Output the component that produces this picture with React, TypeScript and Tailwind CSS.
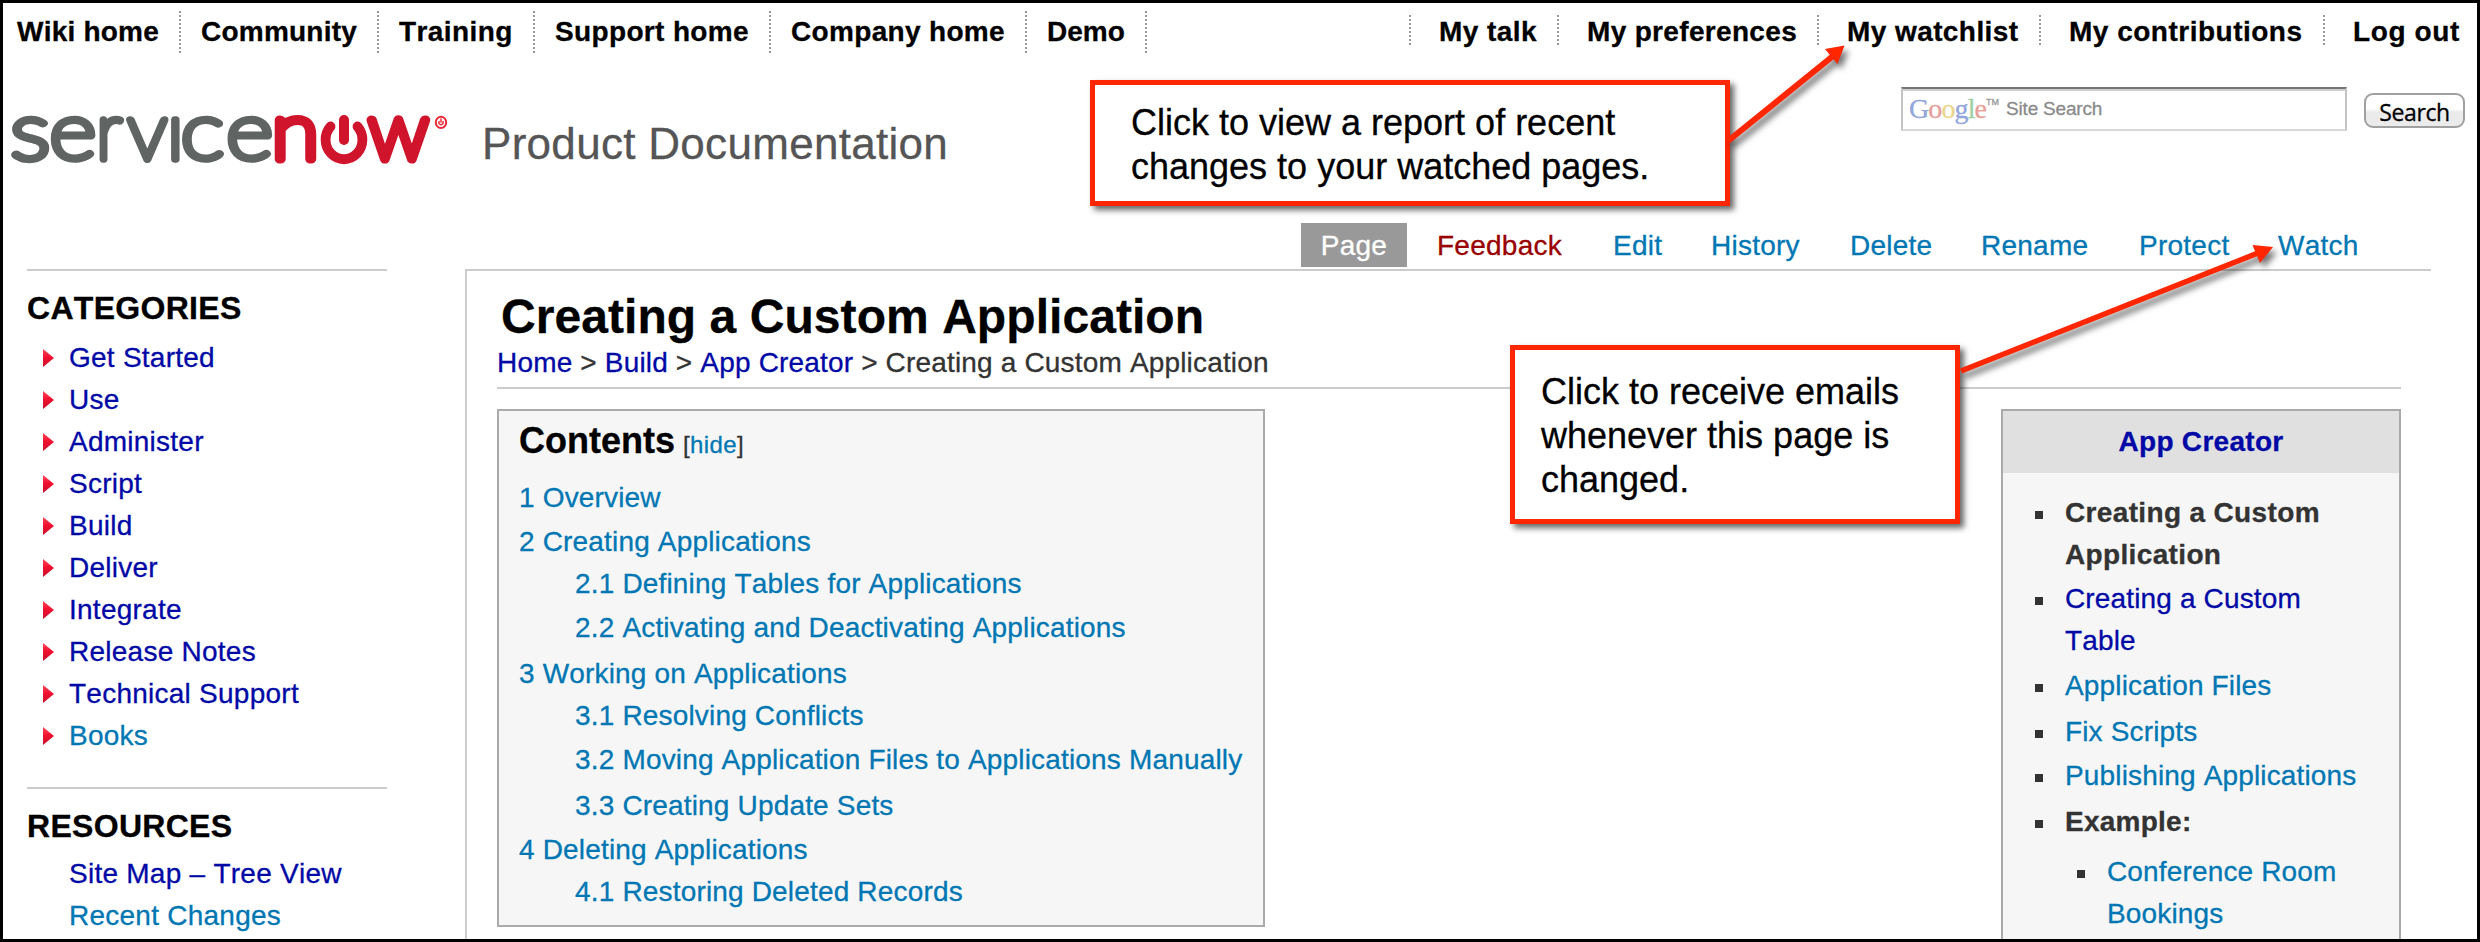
import type { ReactNode } from 'react';

const VISITED = 'text-[#0008a6]';
const LINK = 'text-[#0077b3]';

const DOTS = 'bg-[repeating-linear-gradient(to_bottom,#999_0px,#999_2px,#fff_2px,#fff_4px)]';

const siteLinks = [
  { label: 'Wiki home', box: 'w-[178px] pl-[14px] tracking-[0.22px]' },
  { label: 'Community', box: 'w-[198px] pl-[20px] tracking-[0.22px]' },
  { label: 'Training', box: 'w-[156px] pl-[20px] tracking-[0.4px]' },
  { label: 'Support home', box: 'w-[236px] pl-[20px] tracking-[0.35px]' },
  { label: 'Company home', box: 'w-[256px] pl-[20px] tracking-[0.33px]' },
  { label: 'Demo', box: 'w-[120px] pl-[20px]' },
];

const userLinks = [
  { label: 'My talk', box: 'w-[148px] tracking-[0.44px]' },
  { label: 'My preferences', box: 'w-[260px] tracking-[0.33px]' },
  { label: 'My watchlist', box: 'w-[222px] tracking-[0.42px]' },
  { label: 'My contributions', box: 'w-[284px] tracking-[0.5px]' },
  { label: 'Log out', box: 'w-[154px] tracking-[0.6px]' },
];

const actions = [
  { label: 'Feedback', box: 'w-[176px] text-[#990000]' },
  { label: 'Edit', box: 'w-[98px]' },
  { label: 'History', box: 'w-[139px]' },
  { label: 'Delete', box: 'w-[131px]' },
  { label: 'Rename', box: 'w-[158px]' },
  { label: 'Protect', box: 'w-[139px]' },
  { label: 'Watch', box: 'w-[100px]' },
];

const categories = [
  'Get Started',
  'Use',
  'Administer',
  'Script',
  'Build',
  'Deliver',
  'Integrate',
  'Release Notes',
  'Technical Support',
  'Books',
];

const toc = [
  { n: '1', label: 'Overview', box: 'h-[44px]' },
  { n: '2', label: 'Creating Applications', box: 'h-[42px]' },
  { n: '2.1', label: 'Defining Tables for Applications', box: 'h-[44px] pl-[56px]' },
  { n: '2.2', label: 'Activating and Deactivating Applications', box: 'h-[46px] pl-[56px]' },
  { n: '3', label: 'Working on Applications', box: 'h-[42px]' },
  { n: '3.1', label: 'Resolving Conflicts', box: 'h-[44px] pl-[56px]' },
  { n: '3.2', label: 'Moving Application Files to Applications Manually', box: 'h-[46px] pl-[56px]' },
  { n: '3.3', label: 'Creating Update Sets', box: 'h-[44px] pl-[56px]' },
  { n: '4', label: 'Deleting Applications', box: 'h-[42px]' },
  { n: '4.1', label: 'Restoring Deleted Records', box: 'h-[42px] pl-[56px]' },
];

function Logo() {
  const gray = { fill: '#606462', stroke: '#606462', strokeWidth: 7.5 };
  const red = { fill: '#d0142c', stroke: '#d0142c', strokeWidth: 9.2 };
  const letters = [
    { ch: 's', x: 10.6, sx: 1.18, paint: gray },
    { ch: 'e', x: 49.5, sx: 1.13, paint: gray },
    { ch: 'r', x: 96.2, sx: 0.93, paint: gray },
    { ch: 'v', x: 127.7, sx: 1, paint: gray },
    { ch: 'ı', x: 166.9, sx: 1, paint: gray },
    { ch: 'c', x: 180.7, sx: 1.15, paint: gray },
    { ch: 'e', x: 226.2, sx: 1.13, paint: gray },
    { ch: 'n', x: 271.7, sx: 1.08, paint: red },
    { ch: 'w', x: 368.6, sx: 1, paint: red },
  ];
  return (
    <svg
      viewBox="3 83 450 112"
      className="mt-[27px] h-[112px] w-[450px] shrink-0 overflow-visible font-['Lato',sans-serif] text-[80px] font-thin [-webkit-text-stroke:0]"
      strokeLinejoin="round"
      strokeLinecap="round"
    >
      {letters.map((l) => (
        <text key={l.x} transform={`translate(${l.x} 158.7) scale(${l.sx} 1)`} {...l.paint}>
          {l.ch}
        </text>
      ))}
      <path d="M330.5 126.5A18.4 19.5 0 1 0 357.5 126.5" fill="none" stroke="#d0142c" strokeWidth="9.8" />
      <path d="M344 120V140" fill="none" stroke="#d0142c" strokeWidth="10" />
      <ellipse cx="441" cy="122.4" rx="5.2" ry="5.6" fill="none" stroke="#ee2a38" strokeWidth="2" />
      <path d="M439 121.4v2.2q2 2.4 4 0v-2.2M441 119v3" fill="none" stroke="#ee2a38" strokeWidth="1.5" />
    </svg>
  );
}

function SearchForm() {
  return (
    <form className="flex items-start">
      <div className="mt-[31px] flex h-[44px] w-[446px] items-start border-x-2 border-t-2 border-b-2 border-x-[#c4c4c4] border-t-[#757575] border-b-[#d8d8d8] bg-white pl-[6px] whitespace-nowrap shadow-[inset_0_2px_0_#cfcfcf]">
        <span className="mt-[6px] font-['Liberation_Serif',serif] text-[28px] leading-[28px] tracking-[-0.9px]">
          <span className="text-[#92a6dc]">G</span>
          <span className="text-[#e79c98]">o</span>
          <span className="text-[#ead58c]">o</span>
          <span className="text-[#92a6dc]">g</span>
          <span className="text-[#9fd0a4]">l</span>
          <span className="text-[#e9a09a]">e</span>
        </span>
        <span className="mt-[8px] text-[9px] leading-[10px] text-[#999]">TM</span>
        <span className="mt-[9px] ml-[7px] text-[19px] leading-[21px] tracking-[-0.2px] text-[#8a8a8a]">Site Search</span>
      </div>
      <button
        type="button"
        className="mt-[37px] ml-[17px] h-[35px] w-[101px] rounded-[9px] border-2 border-[#a0a0a0] bg-gradient-to-b from-white from-45% to-[#ebebeb] to-55% pt-px font-['Open_Sans','Noto_Sans',sans-serif] text-[23px] leading-[33px] tracking-[-0.4px] text-black"
      >
        Search
      </button>
    </form>
  );
}

function SideHeading({ children }: { children: ReactNode }) {
  return (
    <h2 className="mt-[19px] text-[32px] leading-[36px] font-bold tracking-[0.3px] text-black">{children}</h2>
  );
}

function BoxItem({ children, box }: { children: ReactNode; box: string }) {
  return (
    <li className={`flex items-start ${box}`}>
      <span className="mt-[13px] mr-[22px] h-2 w-2 shrink-0 bg-[#333]" />
      <span className="-mt-[6px] leading-[42px]">{children}</span>
    </li>
  );
}

function Callout({ children, box }: { children: ReactNode; box: string }) {
  return (
    <div
      className={`absolute border-[5px] border-[#ff2600] bg-white text-[36px] leading-[44px] text-black shadow-[4px_4px_6px_rgba(0,0,0,0.6)] ${box}`}
    >
      {children}
    </div>
  );
}

function Arrows() {
  return (
    <svg
      viewBox="3 3 2474 936"
      className="pointer-events-none absolute top-0 left-0 h-[936px] w-[2474px] drop-shadow-[4px_5px_3px_rgba(0,0,0,0.55)]"
    >
      <g fill="#ff2600" stroke="#ff2600">
        <path d="M1728 141L1833 56" strokeWidth="6" />
        <path d="M1844.5 45.5L1825 49L1837.5 64Z" stroke="none" />
        <path d="M1961 371L2258 253" strokeWidth="5.5" />
        <path d="M2273 247L2252.5 245L2260 263Z" stroke="none" />
      </g>
    </svg>
  );
}

export default function App() {
  return (
    <div className="relative h-[942px] w-[2480px] overflow-hidden border-[3px] border-black bg-white font-['Liberation_Sans',Arial,sans-serif] text-[28px] leading-[31px] text-[#333] [font-kerning:none] [-webkit-text-stroke:0.3px]">
      <nav className="flex h-[53px] justify-between font-bold whitespace-nowrap text-black">
        <ul className="flex">
          {siteLinks.map((l) => (
            <li key={l.label} className={`flex justify-between ${l.box}`}>
              <a className="mt-[13px]">{l.label}</a>
              <span className={`mt-2 h-[42px] w-[2px] ${DOTS}`} />
            </li>
          ))}
        </ul>
        <ul className="flex">
          {userLinks.map((l) => (
            <li key={l.label} className={`flex ${l.box}`}>
              <span className={`mt-3 mr-[28px] h-[32px] w-[2px] ${DOTS}`} />
              <a className="mt-[13px]">{l.label}</a>
            </li>
          ))}
        </ul>
      </nav>

      <header className="flex h-[167px] justify-between pr-[12px]">
        <div className="flex">
          <Logo />
          <h1 className="mt-[63px] ml-[29px] text-[44px] leading-[49px] tracking-[0.3px] whitespace-nowrap text-[#555]">
            Product Documentation
          </h1>
        </div>
        <SearchForm />
      </header>

      <div className={`flex h-[44px] pl-[1298px] tracking-[0.25px] ${LINK}`}>
        <a className="mr-[30px] w-[106px] bg-[#999] pt-[7px] text-center text-white">Page</a>
        {actions.map((a) => (
          <a key={a.label} className={`pt-[7px] ${a.box}`}>
            {a.label}
          </a>
        ))}
      </div>

      <div className="flex h-[672px] pt-[2px]">
        <aside className="ml-6 w-[360px] shrink-0 tracking-[0.25px]">
          <section className="h-[518px] border-t-2 border-[#ccc]">
            <SideHeading>CATEGORIES</SideHeading>
            <ul className={`mt-[16px] ${VISITED}`}>
              {categories.map((c) => (
                <li key={c} className="flex h-[42px] items-start pl-4">
                  <svg viewBox="0 0 11 18" className="mt-[7px] mr-[15px] h-[18px] w-[11px]">
                    <defs>
                      <linearGradient id="marker" x1="0" y1="0" x2="0" y2="1">
                        <stop offset="0" stopColor="#ff4a5c" />
                        <stop offset="0.45" stopColor="#f01030" />
                        <stop offset="1" stopColor="#c8102c" />
                      </linearGradient>
                    </defs>
                    <path d="M0 0L11 9L0 18Z" fill="url(#marker)" />
                  </svg>
                  <a className={c === 'Books' ? LINK : ''}>{c}</a>
                </li>
              ))}
            </ul>
          </section>
          <section className="border-t-2 border-[#ccc]">
            <SideHeading>RESOURCES</SideHeading>
            <ul className="mt-[14px] pl-[42px]">
              <li className={`h-[42px] ${VISITED}`}>Site Map – Tree View</li>
              <li className={`h-[42px] ${LINK}`}>Recent Changes</li>
            </ul>
          </section>
        </aside>

        <main className="ml-[78px] h-[670px] w-[1966px] border-t-2 border-l-2 border-[#ccc]">
          <h1 className="mt-[19px] ml-[34px] text-[48px] leading-[53px] font-bold tracking-[0.06px] text-black">
            Creating a Custom Application
          </h1>
          <div className="mt-[4px] ml-[30px] h-[40px] tracking-[0.17px]">
            <a className={VISITED}>Home</a> &gt; <a className={VISITED}>Build</a> &gt;{' '}
            <a className={VISITED}>App Creator</a> &gt; Creating a Custom Application
          </div>
          <div className="ml-[30px] h-[2px] w-[1904px] bg-[#ccc]" />

          <div className="mt-[20px] ml-[30px] flex w-[1904px] items-start justify-between">
            <section className="h-[518px] w-[768px] border-2 border-[#aaa] bg-[#f6f6f6] pt-[9px] pl-5">
              <div className="flex items-baseline">
                <h2 className="text-[36px] leading-[41px] font-bold text-black">Contents</h2>
                <span className="ml-[8px] text-[24px] leading-[27px] tracking-[0.4px]">
                  [<a className={LINK}>hide</a>]
                </span>
              </div>
              <ul className={`mt-[21px] tracking-[0.17px] whitespace-nowrap ${LINK}`}>
                {toc.map((t) => (
                  <li key={t.n} className={t.box}>
                    {t.n} {t.label}
                  </li>
                ))}
              </ul>
            </section>

            <section className="h-[540px] w-[400px] border-2 border-[#aaa] bg-[#f6f6f6]">
              <h2 className={`h-[62px] bg-[#e0e0e0] pt-[15px] text-center font-bold tracking-[0.3px] ${VISITED}`}>
                App Creator
              </h2>
              <ul className="mt-[25px] pl-[32px] tracking-[0.15px]">
                <BoxItem box="h-[86px]">
                  <b className="tracking-[0.35px]">
                    Creating a Custom
                    <br />
                    Application
                  </b>
                </BoxItem>
                <BoxItem box="h-[87px]">
                  <a className={VISITED}>
                    Creating a Custom
                    <br />
                    Table
                  </a>
                </BoxItem>
                <BoxItem box="h-[46px]">
                  <a className={LINK}>Application Files</a>
                </BoxItem>
                <BoxItem box="h-[44px]">
                  <a className={LINK}>Fix Scripts</a>
                </BoxItem>
                <BoxItem box="h-[46px]">
                  <a className={LINK}>Publishing Applications</a>
                </BoxItem>
                <BoxItem box="h-[50px]">
                  <b className="tracking-[0.25px]">Example:</b>
                </BoxItem>
                <BoxItem box="h-[86px] pl-[42px]">
                  <a className={LINK}>
                    Conference Room
                    <br />
                    Bookings
                  </a>
                </BoxItem>
              </ul>
            </section>
          </div>
        </main>
      </div>

      <Callout box="top-[77px] left-[1087px] h-[126px] w-[640px] pt-[16px] pl-[36px]">
        Click to view a report of recent
        <br />
        changes to your watched pages.
      </Callout>
      <Callout box="top-[342px] left-[1507px] h-[179px] w-[450px] pt-[20px] pl-[26px]">
        Click to receive emails
        <br />
        whenever this page is
        <br />
        changed.
      </Callout>
      <Arrows />
    </div>
  );
}
